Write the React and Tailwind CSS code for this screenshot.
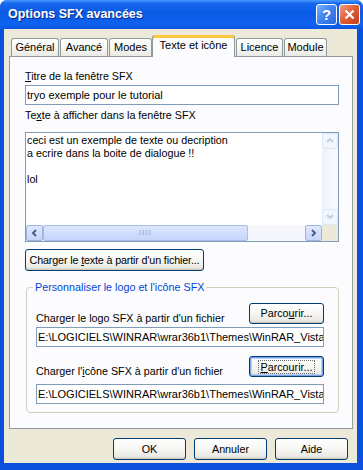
const btnBase =
  "flex items-center justify-center whitespace-nowrap rounded-[3px] border border-[#003C74] bg-[linear-gradient(180deg,#ffffff_0%,#f7f7f4_45%,#ecebe6_85%,#d6d0c5_100%)] text-[10.75px] leading-[13px] text-black";

function Btn({ children, className = "", focused = false }) {
  return (
    <div
      className={`${btnBase} ${
        focused
          ? "shadow-[inset_0_0_0_1px_#7da2e6,inset_0_0_0_2px_#b9cff5]"
          : "shadow-[inset_0_-1px_0_#cdcac0]"
      } ${className}`}
    >
      {focused ? (
        <span className="border border-dotted border-[#6b6b6b] px-[2px] leading-[12px]">
          {children}
        </span>
      ) : (
        children
      )}
    </div>
  );
}

function Chevron({ dir, color }) {
  const d = {
    left: "M5 1 L2 4 L5 7",
    right: "M2 1 L5 4 L2 7",
    up: "M1 5 L4 2 L7 5",
    down: "M1 2 L4 5 L7 2",
  }[dir];
  return (
    <svg width="8" height="8" viewBox="0 0 8 8">
      <path d={d} fill="none" stroke={color} strokeWidth="2" />
    </svg>
  );
}

function Tab({ label, selected, className = "" }) {
  if (selected) {
    return (
      <div
        className={`relative z-10 flex h-[22px] justify-center rounded-t-[3px] border-x border-[#919B9C] bg-[#FCFCFE] pt-[3px] text-[11px] leading-[13px] shadow-[inset_0_3px_0_#ffc83c,inset_0_1px_0_#e68b2c] ${className}`}
      >
        <span className="mt-[1px]">{label}</span>
      </div>
    );
  }
  return (
    <div
      className={`flex h-[19px] justify-center rounded-t-[3px] border border-b-0 border-[#919B9C] bg-[linear-gradient(180deg,#ffffff_0%,#f4f4f0_60%,#e9e8e2_100%)] pt-[2px] text-[11px] leading-[13px] ${className}`}
    >
      {label}
    </div>
  );
}

function Field({ value, className = "" }) {
  return (
    <div
      className={`h-[20px] overflow-hidden whitespace-nowrap border border-[#7F9DB9] bg-white pl-[1px] text-[11px] leading-[18px] ${className}`}
    >
      {value}
    </div>
  );
}

export default function App() {
  const path = "E:\\LOGICIELS\\WINRAR\\wrar36b1\\Themes\\WinRAR_Vista";

  return (
    <div className="flex h-[470px] w-[363px] flex-col overflow-hidden rounded-t-[7px] bg-[#0B4FDC] font-['Liberation_Sans',Arial,sans-serif] text-black">
      {/* barre de titre */}
      <div className="flex h-[29px] items-center bg-[linear-gradient(180deg,#4b9bff_0%,#1667ec_12%,#0a5ae6_45%,#0f63ef_85%,#0b55e0_100%)] pl-[8px] pr-[3px]">
        <span className="flex-1 text-[12.5px] font-bold text-white [text-shadow:1px_1px_0_#0a2a8c]">
          Options SFX avancées
        </span>
        <div className="flex gap-[2px]">
          <div className="flex h-[21px] w-[21px] items-center justify-center rounded-[3px] border border-white bg-[linear-gradient(135deg,#7fb2ff_0%,#3f80ef_50%,#2a68dc_100%)] text-[15px] font-bold leading-none text-white">
            ?
          </div>
          <div className="flex h-[21px] w-[21px] items-center justify-center rounded-[3px] border border-white bg-[linear-gradient(135deg,#f09a7c_0%,#df5b33_50%,#c43e1a_100%)]">
            <svg width="11" height="11" viewBox="0 0 11 11">
              <path d="M1.5 1.5 L9.5 9.5 M9.5 1.5 L1.5 9.5" stroke="white" strokeWidth="2.2" />
            </svg>
          </div>
        </div>
      </div>

      {/* corps */}
      <div className="ml-[4px] mr-[6px] flex h-[434px] flex-col bg-[#ECE9D8] px-[5px] pt-[6px]">
        {/* onglets */}
        <div className="ml-[2px] flex h-[22px] items-end">
          <Tab label="Général" className="w-[48px]" />
          <Tab label="Avancé" className="ml-[1px] w-[48px]" />
          <Tab label="Modes" className="ml-[1px] w-[43px]" />
          <Tab label="Texte et icône" selected className="w-[83px] self-start" />
          <Tab label="Licence" className="ml-[1px] w-[47px]" />
          <Tab label="Module" className="ml-[1px] w-[43px]" />
        </div>

        {/* page de l'onglet */}
        <div className="-mt-px flex w-[344px] flex-col border border-[#919B9C] bg-[#FCFCFE] pb-[15px] pl-[15px] pt-[13px] text-[10.75px] leading-[13px]">
          <div>
            <span className="underline">T</span>itre de la fenêtre SFX
          </div>
          <Field value="tryo exemple pour le tutorial" className="mt-[2px] w-[314px]" />

          <div className="mt-[4px]">
            Te<span className="underline">x</span>te à afficher dans la fenêtre SFX
          </div>

          {/* zone de texte */}
          <div className="mt-[10px] flex h-[110px] w-[314px] flex-col border border-[#7F9DB9] bg-white">
            <div className="flex min-h-0 flex-1">
              <div className="flex-1 whitespace-pre pl-[1px] pt-[1px] leading-[13px]">
                {"ceci est un exemple de texte ou decription\na ecrire dans la boite de dialogue !!\n\nlol"}
              </div>
              <div className="flex w-[16px] flex-col bg-[linear-gradient(90deg,#eef3fd_0%,#f8fafe_100%)]">
                <div className="flex h-[16px] items-center justify-center rounded-[2px] border border-[#dfe7f7] bg-[#f1f5fd]">
                  <Chevron dir="up" color="#c4cfe6" />
                </div>
                <div className="flex-1" />
                <div className="flex h-[16px] items-center justify-center rounded-[2px] border border-[#dfe7f7] bg-[#f1f5fd]">
                  <Chevron dir="down" color="#c4cfe6" />
                </div>
              </div>
            </div>
            <div className="flex h-[16px]">
              <div className="flex flex-1 bg-[#f5f7fd]">
                <div className="flex w-[17px] items-center justify-center rounded-[2px] border border-[#9fb3e0] bg-[linear-gradient(180deg,#dfe8fd_0%,#c6d5fb_100%)]">
                  <Chevron dir="left" color="#4d6185" />
                </div>
                <div className="flex w-[205px] items-center justify-center rounded-[2px] border border-[#a9bde9] bg-[linear-gradient(180deg,#dbe6fd_0%,#c5d6fb_100%)]">
                  <span className="text-[8px] leading-none tracking-[1px] text-[#8ea3cc]">IIII</span>
                </div>
                <div className="flex-1" />
                <div className="flex w-[17px] items-center justify-center rounded-[2px] border border-[#9fb3e0] bg-[linear-gradient(180deg,#dfe8fd_0%,#c6d5fb_100%)]">
                  <Chevron dir="right" color="#4d6185" />
                </div>
              </div>
              <div className="w-[16px] bg-[#ECE9D8]" />
            </div>
          </div>

          <Btn className="mt-[7px] h-[22px] w-[179px] tracking-[-0.15px]">
            <span>
              Charger le <span className="underline">t</span>exte à partir d'un fichier...
            </span>
          </Btn>

          {/* groupe logo et icône */}
          <fieldset className="mt-[10px] ml-[1px] w-[313px] rounded-[4px] border border-[#D0D0BF] p-0">
            <legend className="ml-[6px] px-[2px] text-[10.75px] leading-[13px] text-[#0046D5]">
              Personnaliser le logo et l'icône SFX
            </legend>
            <div className="flex flex-col pb-[8px] pl-[9px] pr-[14px] pt-[9px]">
              <div className="flex h-[21px] items-end justify-between">
                <span className="mb-[-1px]">Charger le logo SFX à partir d'un fichier</span>
                <Btn className="h-[21px] w-[75px]">
                  <span>
                    Parco<span className="underline">u</span>rir...
                  </span>
                </Btn>
              </div>
              <Field value={path} className="mt-[3px] w-[288px]" />

              <div className="mt-[9px] flex h-[21px] items-end justify-between">
                <span className="mb-[-1px]">
                  Charger l'<span className="underline">i</span>cône SFX à partir d'un fichier
                </span>
                <Btn focused className="h-[21px] w-[75px]">
                  <span>
                    <span className="underline">P</span>arcourir...
                  </span>
                </Btn>
              </div>
              <Field value={path} className="mt-[7px] w-[288px]" />
            </div>
          </fieldset>
        </div>

        {/* boutons du bas */}
        <div className="mt-[9px] flex justify-end gap-[8px] pr-[4px]">
          <Btn className="h-[22px] w-[73px]">OK</Btn>
          <Btn className="h-[22px] w-[73px]">Annuler</Btn>
          <Btn className="h-[22px] w-[73px]">Aide</Btn>
        </div>
      </div>
    </div>
  );
}
